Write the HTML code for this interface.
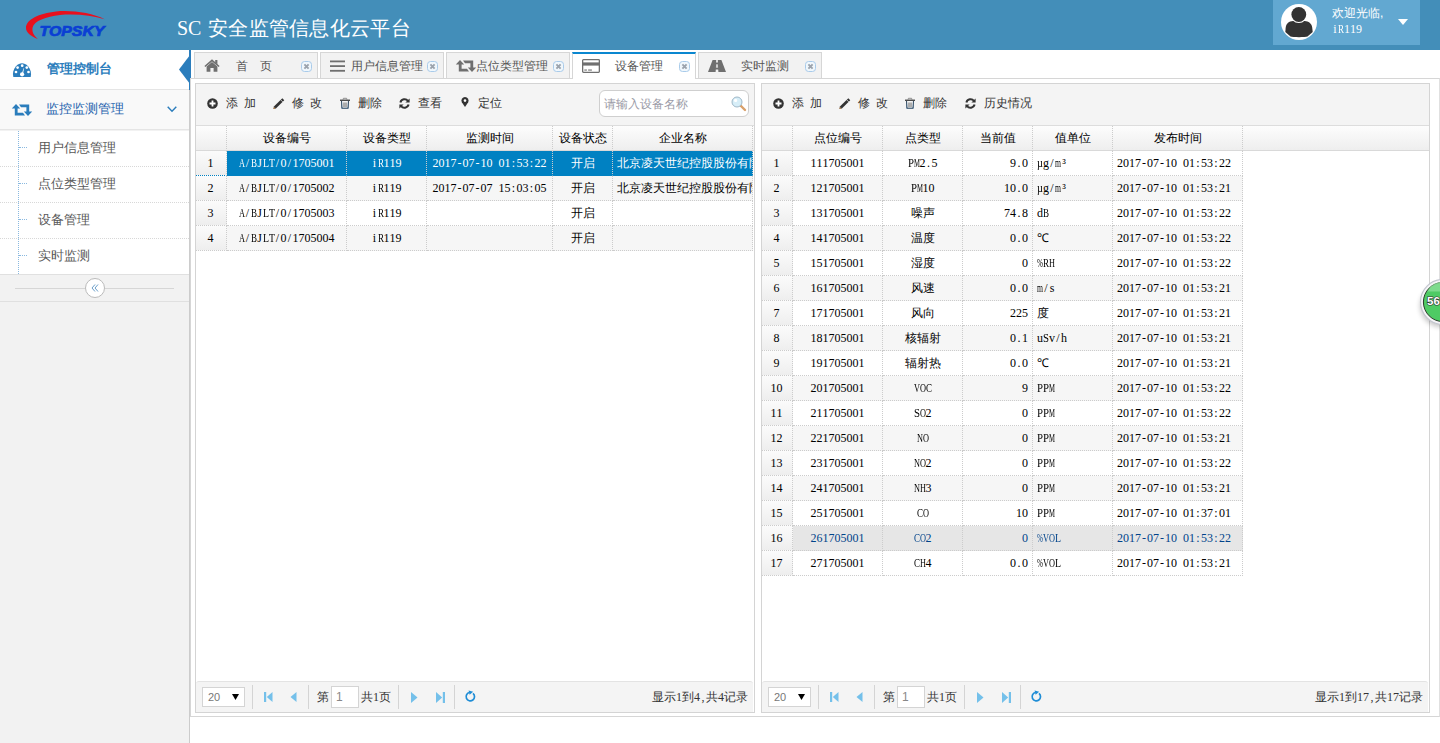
<!DOCTYPE html><html><head><meta charset="utf-8"><title>SC</title><style>
*{box-sizing:border-box;margin:0;padding:0}
html,body{width:1440px;height:743px;overflow:hidden}
body{position:relative;background:#fff;font-family:"Liberation Sans",sans-serif;font-size:12px;color:#333}
.a{position:absolute}
.m{font-family:"Liberation Serif",serif}
.m i,i.s{font-style:normal;display:inline-flex;justify-content:center;width:6px}
i.s{font-family:"Liberation Serif",serif}
.c.m{line-height:24px}
.ws{word-spacing:2.7px}
.t{white-space:nowrap;line-height:14px;height:14px}
svg{display:block;position:absolute;overflow:visible}
/* grid */
.row{position:absolute;left:0;height:25px;display:flex}
.c{height:25px;border-right:1px dotted #ccc;border-bottom:1px dotted #ccc;line-height:24px;white-space:nowrap;overflow:hidden;padding:0 4px;font-size:12px;color:#000}
.hd .c{border-bottom:1px solid #d9d9d9;text-align:center;color:#000}
.rn{background:linear-gradient(to bottom,#fbfbfb,#eeeeee);text-align:center;padding:0 1px 0 0}
.alt{background:#f6f6f6}
.sel .c{background:#0081c2;color:#fff;border-bottom-color:#0081c2}
.sel .rn{background:linear-gradient(to bottom,#fbfbfb,#eeeeee);color:#000}
.hov .c{background:#e6e6e6;color:#00438a}
.hov .rn{background:linear-gradient(to bottom,#fbfbfb,#eeeeee);color:#000}
.ce{text-align:center}.ri{text-align:right;padding-right:4px}.le{text-align:left}
</style></head><body>
<div class="a" style="left:0;top:0;width:1440px;height:50px;background:#438eb9"></div>
<svg style="left:0;top:0" width="120" height="50" viewBox="0 0 120 50">
<path d="M104.7 19.2 C 92 13, 72 10, 56 11.5 C 39 13.5, 26 19.5, 26 28 C 26 32.5, 31 36.5, 37.8 38.9 C 33.5 35.5, 31.8 31.5, 32.6 27.5 C 34 21, 46 16.5, 60 15 C 76 13.6, 92 15.5, 104.7 19.2 Z" fill="#e8101e"/>
<text x="39.5" y="35.6" font-family="Liberation Sans" font-weight="bold" font-style="italic" font-size="14" fill="#0a3fd4" stroke="#0a3fd4" stroke-width="0.7" textLength="65" lengthAdjust="spacingAndGlyphs">TOPSKY</text>
</svg>
<div class="a" style="left:177px;top:16px;height:24px;line-height:24px;color:#fff;white-space:nowrap"><span style="font-family:'Liberation Serif',serif;font-size:20px;display:inline-block;width:31px">SC</span><span style="font-size:20px;letter-spacing:0.3px">安全监管信息化云平台</span></div>
<div class="a" style="left:1273px;top:0;width:147px;height:45px;background:#62a8d1"></div>
<svg style="left:1281px;top:4px" width="36" height="36" viewBox="0 0 36 36">
<circle cx="18" cy="18" r="18" fill="#fff"/>
<path d="M4.3 28 L4.7 23.5 C 5.2 19.5, 8 17.2, 12 17 L 23.6 17 C 27.6 17.2, 30.6 19.5, 31.2 23.5 L 31.7 28 L 26.5 32.6 C 24.5 33.3, 11.5 33.3, 9.5 32.6 Z" fill="#333"/>
<circle cx="17.8" cy="10.5" r="8.6" fill="#fff"/>
<circle cx="17.8" cy="10.5" r="7.4" fill="#333"/>
</svg>
<div class="a t" style="left:1332px;top:6px;color:#fff;font-size:12px">欢迎光临,</div>
<div class="a t m" style="left:1332px;top:22px;color:#fff;font-size:12px"><i>i</i><i style="transform:scaleX(0.75)">R</i><i>1</i><i>1</i><i>9</i></div>
<svg style="left:1397.5px;top:19px" width="10" height="6" viewBox="0 0 10 6"><path d="M0 0 L10 0 L5 6 Z" fill="#fff"/></svg>
<div class="a" style="left:0;top:50px;width:190px;height:693px;background:#f2f2f2;border-right:1px solid #cccccc"></div>
<div class="a" style="left:0;top:50px;width:189px;height:40px;background:#fff;border-bottom:1px solid #e5e5e5"></div>
<svg style="left:13px;top:63px" width="18" height="14" viewBox="0 0 18 14">
<path d="M0.3 14 C -0.6 10.5, 0.2 6, 3 3.2 C 5 1.2, 7 0.3, 9 0.3 C 11 0.3, 13 1.2, 15 3.2 C 17.8 6, 18.6 10.5, 17.7 14 Z" fill="#2b7dbc"/>
<circle cx="3" cy="9" r="1.35" fill="#fff"/><circle cx="4.6" cy="4.6" r="1.35" fill="#fff"/><circle cx="9.2" cy="2.7" r="1.35" fill="#fff"/><circle cx="13.8" cy="4.6" r="1.35" fill="#fff"/><circle cx="15.5" cy="9" r="1.35" fill="#fff"/>
<path d="M8.9 10.5 L10.6 5.2 L11.1 5.3 L10 10.8 Z" fill="#fff"/><circle cx="9.1" cy="11.3" r="2.1" fill="#fff"/>
</svg>
<div class="a t" style="left:47px;top:61.5px;color:#2b7dbc;font-size:13px;font-weight:bold;line-height:14px">管理控制台</div>
<div class="a" style="left:189px;top:50px;width:2px;height:40px;background:#2b7dbc"></div>
<svg style="left:179px;top:55px" width="11" height="29" viewBox="0 0 11 29"><path d="M11 0 L0 14.5 L11 29 Z" fill="#2b7dbc"/></svg>
<div class="a" style="left:0;top:90px;width:189px;height:40px;background:#f9f9f9;border-bottom:1px solid #e5e5e5"></div>
<svg style="left:12px;top:104px" width="20" height="12" viewBox="0 0 20 12">
<path d="M4 0 L8.2 4.4 L5.6 4.4 L5.6 8.8 L11 8.8 L13 11.6 L2.8 11.6 L2.8 4.4 L-0.2 4.4 Z" fill="#2b7dbc"/>
<path d="M16 12 L11.8 7.6 L14.4 7.6 L14.4 3.2 L9 3.2 L7 0.4 L17.2 0.4 L17.2 7.6 L20.2 7.6 Z" fill="#2b7dbc"/>
</svg>
<div class="a t" style="left:46px;top:101.5px;color:#1f64ae;font-size:13px">监控监测管理</div>
<svg style="left:167px;top:106px" width="10" height="7" viewBox="0 0 10 7"><path d="M0.7 0.7 L5 5.3 L9.3 0.7" fill="none" stroke="#2b7dbc" stroke-width="1.4"/></svg>
<div class="a" style="left:0;top:131px;width:189px;height:143px;background:#fff"></div>
<div class="a" style="left:18px;top:131px;width:0;height:143px;border-left:1px dotted #8ab9e0"></div>
<div class="a" style="left:19px;top:147px;width:8px;height:0;border-top:1px dotted #8ab9e0"></div>
<div class="a t" style="left:38px;top:141px;color:#585858;font-size:13px">用户信息管理</div>
<div class="a" style="left:0;top:166px;width:189px;height:0;border-top:1px dotted #d8d8d8"></div>
<div class="a" style="left:19px;top:183px;width:8px;height:0;border-top:1px dotted #8ab9e0"></div>
<div class="a t" style="left:38px;top:177px;color:#585858;font-size:13px">点位类型管理</div>
<div class="a" style="left:0;top:202px;width:189px;height:0;border-top:1px dotted #d8d8d8"></div>
<div class="a" style="left:19px;top:219px;width:8px;height:0;border-top:1px dotted #8ab9e0"></div>
<div class="a t" style="left:38px;top:213px;color:#585858;font-size:13px">设备管理</div>
<div class="a" style="left:0;top:238px;width:189px;height:0;border-top:1px dotted #d8d8d8"></div>
<div class="a" style="left:19px;top:255px;width:8px;height:0;border-top:1px dotted #8ab9e0"></div>
<div class="a t" style="left:38px;top:249px;color:#585858;font-size:13px">实时监测</div>
<div class="a" style="left:0;top:274px;width:189px;height:28px;background:#f2f2f2;border-top:1px solid #e0e0e0;border-bottom:1px solid #e0e0e0"></div>
<div class="a" style="left:15px;top:288px;width:159px;height:1px;background:#d6d6d6"></div>
<div class="a" style="left:85px;top:278px;width:20px;height:20px;border-radius:50%;background:#fff;border:1px solid #bbb"></div>
<svg style="left:90px;top:283px" width="10" height="10" viewBox="0 0 10 10"><path d="M5 1.5 L2 5 L5 8.5 M8 1.5 L5 5 L8 8.5" fill="none" stroke="#6a9ec9" stroke-width="1"/></svg>
<div class="a" style="left:190px;top:78px;width:1250px;height:639px;border-left:1px solid #d6d6d6;border-right:1px solid #d6d6d6;border-bottom:1px solid #d6d6d6;border-top:1px solid #d6d6d6;border-right-color:#e0e0e0"></div>
<div class="a" style="left:194px;top:52px;width:124px;height:26px;background:#f2f2f2;border:1px solid #d6d6d6;border-bottom:none"></div>
<svg style="left:204px;top:59px" width="16" height="13" viewBox="0 0 16 13"><path d="M8 0.3 L15.6 7 L14.6 8.1 L8 2.4 L1.4 8.1 L0.4 7 Z" fill="#6f6f6f"/><path d="M11.2 0.9 L13.4 0.9 L13.4 5.6 L11.2 3.8 Z" fill="#6f6f6f"/><path d="M2.6 7.4 L8 2.9 L13.4 7.4 L13.4 12.7 L9.6 12.7 L9.6 9 L6.4 9 L6.4 12.7 L2.6 12.7 Z" fill="#6f6f6f"/></svg>
<div class="a t" style="left:236px;top:59px;color:#555;font-size:12px">首　页</div>
<svg style="left:301px;top:61px" width="12" height="12" viewBox="0 0 12 12"><rect x="0.5" y="0.5" width="10" height="10" rx="3" fill="#f0f7fc" stroke="#a9cbea" stroke-width="1"/><path d="M3.4 3.4 L7.6 7.6 M7.6 3.4 L3.4 7.6" stroke="#9ba3ad" stroke-width="1.9"/></svg>
<div class="a" style="left:320px;top:52px;width:124px;height:26px;background:#f2f2f2;border:1px solid #d6d6d6;border-bottom:none"></div>
<svg style="left:330px;top:60px" width="15" height="12" viewBox="0 0 15 12"><rect x="0" y="0.5" width="15" height="1.8" fill="#6f6f6f"/><rect x="0" y="5.2" width="15" height="1.8" fill="#6f6f6f"/><rect x="0" y="9.9" width="15" height="1.8" fill="#6f6f6f"/></svg>
<div class="a t" style="left:351px;top:59px;color:#555;font-size:12px">用户信息管理</div>
<svg style="left:427px;top:61px" width="12" height="12" viewBox="0 0 12 12"><rect x="0.5" y="0.5" width="10" height="10" rx="3" fill="#f0f7fc" stroke="#a9cbea" stroke-width="1"/><path d="M3.4 3.4 L7.6 7.6 M7.6 3.4 L3.4 7.6" stroke="#9ba3ad" stroke-width="1.9"/></svg>
<div class="a" style="left:446px;top:52px;width:124px;height:26px;background:#f2f2f2;border:1px solid #d6d6d6;border-bottom:none"></div>
<svg style="left:456px;top:60px" width="20" height="12" viewBox="0 0 20 12"><path d="M4 0 L8.2 4.4 L5.6 4.4 L5.6 8.8 L11 8.8 L13 11.6 L2.8 11.6 L2.8 4.4 L-0.2 4.4 Z" fill="#6f6f6f"/><path d="M16 12 L11.8 7.6 L14.4 7.6 L14.4 3.2 L9 3.2 L7 0.4 L17.2 0.4 L17.2 7.6 L20.2 7.6 Z" fill="#6f6f6f"/></svg>
<div class="a t" style="left:476px;top:59px;color:#555;font-size:12px">点位类型管理</div>
<svg style="left:553px;top:61px" width="12" height="12" viewBox="0 0 12 12"><rect x="0.5" y="0.5" width="10" height="10" rx="3" fill="#f0f7fc" stroke="#a9cbea" stroke-width="1"/><path d="M3.4 3.4 L7.6 7.6 M7.6 3.4 L3.4 7.6" stroke="#9ba3ad" stroke-width="1.9"/></svg>
<div class="a" style="left:572px;top:52px;width:124px;height:27px;background:#fff;border:1px solid #d6d6d6;border-bottom:none;border-top:2px solid #0a87d0"></div>
<svg style="left:582px;top:59px" width="18" height="14" viewBox="0 0 18 14"><rect x="0.65" y="0.65" width="16.7" height="12.7" rx="0.8" fill="none" stroke="#6f6f6f" stroke-width="1.3"/><rect x="0.6" y="3.4" width="16.8" height="3.2" fill="#6f6f6f"/><rect x="2.3" y="10.5" width="2.6" height="1.1" fill="#6f6f6f"/><rect x="6.1" y="10.5" width="3.8" height="1.1" fill="#6f6f6f"/></svg>
<div class="a t" style="left:615px;top:59px;color:#555;font-size:12px">设备管理</div>
<svg style="left:679px;top:61px" width="12" height="12" viewBox="0 0 12 12"><rect x="0.5" y="0.5" width="10" height="10" rx="3" fill="#f0f7fc" stroke="#a9cbea" stroke-width="1"/><path d="M3.4 3.4 L7.6 7.6 M7.6 3.4 L3.4 7.6" stroke="#9ba3ad" stroke-width="1.9"/></svg>
<div class="a" style="left:698px;top:52px;width:124px;height:26px;background:#f2f2f2;border:1px solid #d6d6d6;border-bottom:none"></div>
<svg style="left:708px;top:60px" width="18" height="12" viewBox="0 0 18 12"><path d="M4.6 0 L8.2 0 L8.1 2.6 L9.9 2.6 L9.8 0 L13.4 0 L18 12 L10.4 12 L10.2 9.4 L7.8 9.4 L7.6 12 L0 12 Z" fill="#6f6f6f"/><path d="M8.1 4.2 L9.9 4.2 L10.1 7.8 L7.9 7.8 Z" fill="#d0d0d0"/></svg>
<div class="a t" style="left:741px;top:59px;color:#555;font-size:12px">实时监测</div>
<svg style="left:805px;top:61px" width="12" height="12" viewBox="0 0 12 12"><rect x="0.5" y="0.5" width="10" height="10" rx="3" fill="#f0f7fc" stroke="#a9cbea" stroke-width="1"/><path d="M3.4 3.4 L7.6 7.6 M7.6 3.4 L3.4 7.6" stroke="#9ba3ad" stroke-width="1.9"/></svg>
<div class="a" style="left:195px;top:83px;width:560px;height:630px;border:1px solid #d4d4d4;background:#fff;overflow:hidden">
<div class="a" style="left:0;top:0;width:558px;height:42px;background:#f4f4f4;border-bottom:1px solid #dddddd"></div>
<svg style="left:11px;top:14px" width="11" height="11" viewBox="0 0 11 11"><circle cx="5.5" cy="5.5" r="5.3" fill="#333"/><path d="M5.5 2.5 L5.5 8.5 M2.5 5.5 L8.5 5.5" stroke="#fff" stroke-width="1.8"/></svg>
<div class="a t ws" style="left:30px;top:12px;color:#333;font-size:12px">添 加</div>
<svg style="left:77px;top:15px" width="12" height="11" viewBox="0 0 12 11"><path d="M0.5 9.8 L1.18 7.2 L9.33 -0.7 L11.27 1.3 L3.12 9.2 Z" fill="#333"/><path d="M7.6 0.68 L9.83 2.98" stroke="#f4f4f4" stroke-width="0.7"/><path d="M0.5 9.8 L1.18 7.2 L3.12 9.2 Z" fill="#555"/><path d="M0.5 9.9 L0.9 8.2 L2.2 9.5 Z" fill="#d98a3a"/></svg>
<div class="a t ws" style="left:96px;top:12px;color:#333;font-size:12px">修 改</div>
<svg style="left:144px;top:14px" width="10" height="11" viewBox="0 0 10 11"><rect x="0" y="1.6" width="10" height="1.3" fill="#3a3a3a"/><path d="M3 1.8 L3.4 0.3 L6.6 0.3 L7 1.8" fill="none" stroke="#777" stroke-width="0.8"/><path d="M1.5 3 L1.9 10.2 L8.1 10.2 L8.5 3" fill="none" stroke="#4a7fb0" stroke-width="1.1"/><path d="M1.5 3 L1.9 10.2 L8.1 10.2 L8.5 3" fill="none" stroke="#333" stroke-width="0.6"/><path d="M4 4.5 L4 9 M6 4.5 L6 9" stroke="#555" stroke-width="0.9"/></svg>
<div class="a t ws" style="left:162px;top:12px;color:#333;font-size:12px">删除</div>
<svg style="left:203px;top:14px" width="11" height="11" viewBox="0 0 11 11"><path d="M1.4 4.4 A4.3 4.3 0 0 1 9 3" fill="none" stroke="#333" stroke-width="2"/><path d="M10.6 0.4 L10.6 4.6 L6.4 4.6 Z" fill="#333"/><path d="M9.6 6.6 A4.3 4.3 0 0 1 2 8" fill="none" stroke="#333" stroke-width="2"/><path d="M0.4 10.6 L0.4 6.4 L4.6 6.4 Z" fill="#333"/></svg>
<div class="a t ws" style="left:222px;top:12px;color:#333;font-size:12px">查看</div>
<svg style="left:265px;top:13px" width="8" height="10" viewBox="0 0 8 10"><path d="M4 10 L0.8 5.2 A3.6 3.6 0 1 1 7.2 5.2 Z" fill="#333"/><circle cx="4" cy="3.6" r="1.3" fill="#fff"/></svg>
<div class="a t ws" style="left:282px;top:12px;color:#333;font-size:12px">定位</div>
<div class="a" style="left:403px;top:6px;width:150px;height:27px;border:1px solid #cfcfcf;border-radius:6px;background:#fff"></div>
<div class="a t" style="left:408px;top:13px;color:#9a9aa6;font-size:12px">请输入设备名称</div>
<svg style="left:535px;top:12px" width="15" height="15" viewBox="0 0 15 15"><path d="M9.5 9.5 L14 14" stroke="#d9a06a" stroke-width="2.4" stroke-linecap="round"/><circle cx="6" cy="6" r="5" fill="#d7eef8" stroke="#9fb8c8" stroke-width="1"/><circle cx="4.6" cy="4.4" r="1.6" fill="#fff"/></svg>
<div class="a" style="left:0;top:42px;width:558px;height:25px;background:linear-gradient(to bottom,#fdfdfd,#eeeeee);border-bottom:1px solid #d9d9d9"></div>
<div class="row hd" style="top:42px">
<div class="c" style="width:31px;background:transparent"></div>
<div class="c" style="width:120px">设备编号</div>
<div class="c" style="width:80px">设备类型</div>
<div class="c" style="width:126px">监测时间</div>
<div class="c" style="width:60px">设备状态</div>
<div class="c" style="width:140px">企业名称</div>
</div>
<div class="row sel" style="top:67px">
<div class="c rn m" style="width:31px"><i>1</i></div>
<div class="c ce m" style="width:120px"><i style="transform:scaleX(0.69)">A</i><i>/</i><i style="transform:scaleX(0.75)">B</i><i>J</i><i style="transform:scaleX(0.82)">L</i><i style="transform:scaleX(0.82)">T</i><i>/</i><i>0</i><i>/</i><i>1</i><i>7</i><i>0</i><i>5</i><i>0</i><i>0</i><i>1</i></div>
<div class="c ce m" style="width:80px"><i>i</i><i style="transform:scaleX(0.75)">R</i><i>1</i><i>1</i><i>9</i></div>
<div class="c ce m" style="width:126px"><i>2</i><i>0</i><i>1</i><i>7</i><i>-</i><i>0</i><i>7</i><i>-</i><i>1</i><i>0</i><i>&nbsp;</i><i>0</i><i>1</i><i>:</i><i>5</i><i>3</i><i>:</i><i>2</i><i>2</i></div>
<div class="c ce" style="width:60px">开启</div>
<div class="c le" style="width:140px">北京凌天世纪控股股份有限公司</div>
</div>
<div class="row alt" style="top:92px">
<div class="c rn m" style="width:31px"><i>2</i></div>
<div class="c ce m" style="width:120px"><i style="transform:scaleX(0.69)">A</i><i>/</i><i style="transform:scaleX(0.75)">B</i><i>J</i><i style="transform:scaleX(0.82)">L</i><i style="transform:scaleX(0.82)">T</i><i>/</i><i>0</i><i>/</i><i>1</i><i>7</i><i>0</i><i>5</i><i>0</i><i>0</i><i>2</i></div>
<div class="c ce m" style="width:80px"><i>i</i><i style="transform:scaleX(0.75)">R</i><i>1</i><i>1</i><i>9</i></div>
<div class="c ce m" style="width:126px"><i>2</i><i>0</i><i>1</i><i>7</i><i>-</i><i>0</i><i>7</i><i>-</i><i>0</i><i>7</i><i>&nbsp;</i><i>1</i><i>5</i><i>:</i><i>0</i><i>3</i><i>:</i><i>0</i><i>5</i></div>
<div class="c ce" style="width:60px">开启</div>
<div class="c le" style="width:140px">北京凌天世纪控股股份有限公司</div>
</div>
<div class="row" style="top:117px">
<div class="c rn m" style="width:31px"><i>3</i></div>
<div class="c ce m" style="width:120px"><i style="transform:scaleX(0.69)">A</i><i>/</i><i style="transform:scaleX(0.75)">B</i><i>J</i><i style="transform:scaleX(0.82)">L</i><i style="transform:scaleX(0.82)">T</i><i>/</i><i>0</i><i>/</i><i>1</i><i>7</i><i>0</i><i>5</i><i>0</i><i>0</i><i>3</i></div>
<div class="c ce m" style="width:80px"><i>i</i><i style="transform:scaleX(0.75)">R</i><i>1</i><i>1</i><i>9</i></div>
<div class="c ce m" style="width:126px"></div>
<div class="c ce" style="width:60px">开启</div>
<div class="c le m" style="width:140px"></div>
</div>
<div class="row alt" style="top:142px">
<div class="c rn m" style="width:31px"><i>4</i></div>
<div class="c ce m" style="width:120px"><i style="transform:scaleX(0.69)">A</i><i>/</i><i style="transform:scaleX(0.75)">B</i><i>J</i><i style="transform:scaleX(0.82)">L</i><i style="transform:scaleX(0.82)">T</i><i>/</i><i>0</i><i>/</i><i>1</i><i>7</i><i>0</i><i>5</i><i>0</i><i>0</i><i>4</i></div>
<div class="c ce m" style="width:80px"><i>i</i><i style="transform:scaleX(0.75)">R</i><i>1</i><i>1</i><i>9</i></div>
<div class="c ce m" style="width:126px"></div>
<div class="c ce" style="width:60px">开启</div>
<div class="c le m" style="width:140px"></div>
</div>
<div class="a" style="left:0;top:597px;width:557px;height:31px;background:#f4f4f4;border-top:1px solid #e3e3e3;border-radius:3px 3px 0 0"></div>
<div class="a m" style="left:6px;top:603px;width:43px;height:20px;border:1px solid #d4d4d4;background:#fff;font-family:'Liberation Sans',sans-serif;letter-spacing:0;font-size:11px;color:#777;line-height:19px;padding-left:5px">20</div>
<svg style="left:36px;top:610px" width="7" height="6" viewBox="0 0 7 6"><path d="M0 0 L7 0 L3.5 6 Z" fill="#000"/></svg>
<div class="a" style="left:56px;top:601px;width:1px;height:24px;background:#d4d4d4"></div>
<div class="a" style="left:112px;top:601px;width:1px;height:24px;background:#d4d4d4"></div>
<div class="a" style="left:202px;top:601px;width:1px;height:24px;background:#d4d4d4"></div>
<div class="a" style="left:258px;top:601px;width:1px;height:24px;background:#d4d4d4"></div>
<svg style="left:68px;top:608px" width="9" height="10" viewBox="0 0 9 10"><rect x="0" y="0" width="2.2" height="10" fill="#74c0ea"/><path d="M8.5 0 L2.8 5 L8.5 10 Z" fill="#74c0ea"/></svg>
<svg style="left:94px;top:608px" width="7" height="10" viewBox="0 0 7 10"><path d="M6.5 0 L0.5 5 L6.5 10 Z" fill="#74c0ea"/></svg>
<div class="a t" style="left:121px;top:606px;color:#333">第</div>
<div class="a" style="left:135px;top:602px;width:28px;height:22px;border:1px solid #d4d4d4;background:#fff;color:#888;font-size:12px;line-height:20px;padding-left:4px">1</div>
<div class="a t" style="left:165px;top:606px;color:#333">共<i class="s">1</i>页</div>
<svg style="left:215px;top:608px" width="7" height="11" viewBox="0 0 7 11"><path d="M0 0 L6.5 5.5 L0 11 Z" fill="#74c0ea"/></svg>
<svg style="left:240px;top:608px" width="9" height="11" viewBox="0 0 9 11"><path d="M0 0 L6.2 5.5 L0 11 Z" fill="#74c0ea"/><rect x="6.8" y="0" width="2.2" height="11" fill="#74c0ea"/></svg>
<svg style="left:269px;top:606px" width="12" height="12" viewBox="0 0 12 12"><path d="M8.0 3.4 A4.2 4.2 0 1 1 4.6 2.5" fill="none" stroke="#1f8dd6" stroke-width="1.7"/><path d="M3.6 0.4 L4.6 4.8 L8.2 1.8 Z" fill="#1f8dd6"/></svg>
<div class="a t" style="right:6px;top:606px;color:#333">显示<i class="s">1</i>到<i class="s">4</i><i class="s">,</i>共<i class="s">4</i>记录</div>
</div>
<div class="a" style="left:761px;top:83px;width:669px;height:630px;border:1px solid #d4d4d4;background:#fff;overflow:hidden">
<div class="a" style="left:0;top:0;width:667px;height:42px;background:#f4f4f4;border-bottom:1px solid #dddddd"></div>
<svg style="left:11px;top:14px" width="11" height="11" viewBox="0 0 11 11"><circle cx="5.5" cy="5.5" r="5.3" fill="#333"/><path d="M5.5 2.5 L5.5 8.5 M2.5 5.5 L8.5 5.5" stroke="#fff" stroke-width="1.8"/></svg>
<div class="a t ws" style="left:30px;top:12px;color:#333;font-size:12px">添 加</div>
<svg style="left:77px;top:15px" width="12" height="11" viewBox="0 0 12 11"><path d="M0.5 9.8 L1.18 7.2 L9.33 -0.7 L11.27 1.3 L3.12 9.2 Z" fill="#333"/><path d="M7.6 0.68 L9.83 2.98" stroke="#f4f4f4" stroke-width="0.7"/><path d="M0.5 9.8 L1.18 7.2 L3.12 9.2 Z" fill="#555"/><path d="M0.5 9.9 L0.9 8.2 L2.2 9.5 Z" fill="#d98a3a"/></svg>
<div class="a t ws" style="left:96px;top:12px;color:#333;font-size:12px">修 改</div>
<svg style="left:143px;top:14px" width="10" height="11" viewBox="0 0 10 11"><rect x="0" y="1.6" width="10" height="1.3" fill="#3a3a3a"/><path d="M3 1.8 L3.4 0.3 L6.6 0.3 L7 1.8" fill="none" stroke="#777" stroke-width="0.8"/><path d="M1.5 3 L1.9 10.2 L8.1 10.2 L8.5 3" fill="none" stroke="#4a7fb0" stroke-width="1.1"/><path d="M1.5 3 L1.9 10.2 L8.1 10.2 L8.5 3" fill="none" stroke="#333" stroke-width="0.6"/><path d="M4 4.5 L4 9 M6 4.5 L6 9" stroke="#555" stroke-width="0.9"/></svg>
<div class="a t ws" style="left:161px;top:12px;color:#333;font-size:12px">删除</div>
<svg style="left:203px;top:14px" width="11" height="11" viewBox="0 0 11 11"><path d="M1.4 4.4 A4.3 4.3 0 0 1 9 3" fill="none" stroke="#333" stroke-width="2"/><path d="M10.6 0.4 L10.6 4.6 L6.4 4.6 Z" fill="#333"/><path d="M9.6 6.6 A4.3 4.3 0 0 1 2 8" fill="none" stroke="#333" stroke-width="2"/><path d="M0.4 10.6 L0.4 6.4 L4.6 6.4 Z" fill="#333"/></svg>
<div class="a t ws" style="left:222px;top:12px;color:#333;font-size:12px">历史情况</div>
<div class="a" style="left:0;top:42px;width:667px;height:25px;background:linear-gradient(to bottom,#fdfdfd,#eeeeee);border-bottom:1px solid #d9d9d9"></div>
<div class="row hd" style="top:42px">
<div class="c" style="width:31px;background:transparent"></div>
<div class="c" style="width:90px">点位编号</div>
<div class="c" style="width:80px">点类型</div>
<div class="c" style="width:70px">当前值</div>
<div class="c" style="width:80px">值单位</div>
<div class="c" style="width:130px">发布时间</div>
</div>
<div class="row" style="top:67px">
<div class="c rn m" style="width:31px"><i>1</i></div>
<div class="c ce m" style="width:90px"><i>1</i><i>1</i><i>1</i><i>7</i><i>0</i><i>5</i><i>0</i><i>0</i><i>1</i></div>
<div class="c ce m" style="width:80px"><i style="transform:scaleX(0.90)">P</i><i style="transform:scaleX(0.56)">M</i><i>2</i><i>.</i><i>5</i></div>
<div class="c ri m" style="width:70px"><i>9</i><i>.</i><i>0</i></div>
<div class="c le m" style="width:80px"><i style="transform:scaleX(0.87)">µ</i><i>g</i><i>/</i><i style="transform:scaleX(0.64)">m</i><i>³</i></div>
<div class="c le m" style="width:130px"><i>2</i><i>0</i><i>1</i><i>7</i><i>-</i><i>0</i><i>7</i><i>-</i><i>1</i><i>0</i><i>&nbsp;</i><i>0</i><i>1</i><i>:</i><i>5</i><i>3</i><i>:</i><i>2</i><i>2</i></div>
</div>
<div class="row alt" style="top:92px">
<div class="c rn m" style="width:31px"><i>2</i></div>
<div class="c ce m" style="width:90px"><i>1</i><i>2</i><i>1</i><i>7</i><i>0</i><i>5</i><i>0</i><i>0</i><i>1</i></div>
<div class="c ce m" style="width:80px"><i style="transform:scaleX(0.90)">P</i><i style="transform:scaleX(0.56)">M</i><i>1</i><i>0</i></div>
<div class="c ri m" style="width:70px"><i>1</i><i>0</i><i>.</i><i>0</i></div>
<div class="c le m" style="width:80px"><i style="transform:scaleX(0.87)">µ</i><i>g</i><i>/</i><i style="transform:scaleX(0.64)">m</i><i>³</i></div>
<div class="c le m" style="width:130px"><i>2</i><i>0</i><i>1</i><i>7</i><i>-</i><i>0</i><i>7</i><i>-</i><i>1</i><i>0</i><i>&nbsp;</i><i>0</i><i>1</i><i>:</i><i>5</i><i>3</i><i>:</i><i>2</i><i>1</i></div>
</div>
<div class="row" style="top:117px">
<div class="c rn m" style="width:31px"><i>3</i></div>
<div class="c ce m" style="width:90px"><i>1</i><i>3</i><i>1</i><i>7</i><i>0</i><i>5</i><i>0</i><i>0</i><i>1</i></div>
<div class="c ce" style="width:80px">噪声</div>
<div class="c ri m" style="width:70px"><i>7</i><i>4</i><i>.</i><i>8</i></div>
<div class="c le m" style="width:80px"><i>d</i><i style="transform:scaleX(0.75)">B</i></div>
<div class="c le m" style="width:130px"><i>2</i><i>0</i><i>1</i><i>7</i><i>-</i><i>0</i><i>7</i><i>-</i><i>1</i><i>0</i><i>&nbsp;</i><i>0</i><i>1</i><i>:</i><i>5</i><i>3</i><i>:</i><i>2</i><i>2</i></div>
</div>
<div class="row alt" style="top:142px">
<div class="c rn m" style="width:31px"><i>4</i></div>
<div class="c ce m" style="width:90px"><i>1</i><i>4</i><i>1</i><i>7</i><i>0</i><i>5</i><i>0</i><i>0</i><i>1</i></div>
<div class="c ce" style="width:80px">温度</div>
<div class="c ri m" style="width:70px"><i>0</i><i>.</i><i>0</i></div>
<div class="c le" style="width:80px">℃</div>
<div class="c le m" style="width:130px"><i>2</i><i>0</i><i>1</i><i>7</i><i>-</i><i>0</i><i>7</i><i>-</i><i>1</i><i>0</i><i>&nbsp;</i><i>0</i><i>1</i><i>:</i><i>5</i><i>3</i><i>:</i><i>2</i><i>2</i></div>
</div>
<div class="row" style="top:167px">
<div class="c rn m" style="width:31px"><i>5</i></div>
<div class="c ce m" style="width:90px"><i>1</i><i>5</i><i>1</i><i>7</i><i>0</i><i>5</i><i>0</i><i>0</i><i>1</i></div>
<div class="c ce" style="width:80px">湿度</div>
<div class="c ri m" style="width:70px"><i>0</i></div>
<div class="c le m" style="width:80px"><i style="transform:scaleX(0.60)">%</i><i style="transform:scaleX(0.75)">R</i><i style="transform:scaleX(0.69)">H</i></div>
<div class="c le m" style="width:130px"><i>2</i><i>0</i><i>1</i><i>7</i><i>-</i><i>0</i><i>7</i><i>-</i><i>1</i><i>0</i><i>&nbsp;</i><i>0</i><i>1</i><i>:</i><i>5</i><i>3</i><i>:</i><i>2</i><i>2</i></div>
</div>
<div class="row alt" style="top:192px">
<div class="c rn m" style="width:31px"><i>6</i></div>
<div class="c ce m" style="width:90px"><i>1</i><i>6</i><i>1</i><i>7</i><i>0</i><i>5</i><i>0</i><i>0</i><i>1</i></div>
<div class="c ce" style="width:80px">风速</div>
<div class="c ri m" style="width:70px"><i>0</i><i>.</i><i>0</i></div>
<div class="c le m" style="width:80px"><i style="transform:scaleX(0.64)">m</i><i>/</i><i>s</i></div>
<div class="c le m" style="width:130px"><i>2</i><i>0</i><i>1</i><i>7</i><i>-</i><i>0</i><i>7</i><i>-</i><i>1</i><i>0</i><i>&nbsp;</i><i>0</i><i>1</i><i>:</i><i>5</i><i>3</i><i>:</i><i>2</i><i>1</i></div>
</div>
<div class="row" style="top:217px">
<div class="c rn m" style="width:31px"><i>7</i></div>
<div class="c ce m" style="width:90px"><i>1</i><i>7</i><i>1</i><i>7</i><i>0</i><i>5</i><i>0</i><i>0</i><i>1</i></div>
<div class="c ce" style="width:80px">风向</div>
<div class="c ri m" style="width:70px"><i>2</i><i>2</i><i>5</i></div>
<div class="c le" style="width:80px">度</div>
<div class="c le m" style="width:130px"><i>2</i><i>0</i><i>1</i><i>7</i><i>-</i><i>0</i><i>7</i><i>-</i><i>1</i><i>0</i><i>&nbsp;</i><i>0</i><i>1</i><i>:</i><i>5</i><i>3</i><i>:</i><i>2</i><i>1</i></div>
</div>
<div class="row alt" style="top:242px">
<div class="c rn m" style="width:31px"><i>8</i></div>
<div class="c ce m" style="width:90px"><i>1</i><i>8</i><i>1</i><i>7</i><i>0</i><i>5</i><i>0</i><i>0</i><i>1</i></div>
<div class="c ce" style="width:80px">核辐射</div>
<div class="c ri m" style="width:70px"><i>0</i><i>.</i><i>1</i></div>
<div class="c le m" style="width:80px"><i>u</i><i style="transform:scaleX(0.90)">S</i><i>v</i><i>/</i><i>h</i></div>
<div class="c le m" style="width:130px"><i>2</i><i>0</i><i>1</i><i>7</i><i>-</i><i>0</i><i>7</i><i>-</i><i>1</i><i>0</i><i>&nbsp;</i><i>0</i><i>1</i><i>:</i><i>5</i><i>3</i><i>:</i><i>2</i><i>1</i></div>
</div>
<div class="row" style="top:267px">
<div class="c rn m" style="width:31px"><i>9</i></div>
<div class="c ce m" style="width:90px"><i>1</i><i>9</i><i>1</i><i>7</i><i>0</i><i>5</i><i>0</i><i>0</i><i>1</i></div>
<div class="c ce" style="width:80px">辐射热</div>
<div class="c ri m" style="width:70px"><i>0</i><i>.</i><i>0</i></div>
<div class="c le" style="width:80px">℃</div>
<div class="c le m" style="width:130px"><i>2</i><i>0</i><i>1</i><i>7</i><i>-</i><i>0</i><i>7</i><i>-</i><i>1</i><i>0</i><i>&nbsp;</i><i>0</i><i>1</i><i>:</i><i>5</i><i>3</i><i>:</i><i>2</i><i>1</i></div>
</div>
<div class="row alt" style="top:292px">
<div class="c rn m" style="width:31px"><i>1</i><i>0</i></div>
<div class="c ce m" style="width:90px"><i>2</i><i>0</i><i>1</i><i>7</i><i>0</i><i>5</i><i>0</i><i>0</i><i>1</i></div>
<div class="c ce m" style="width:80px"><i style="transform:scaleX(0.69)">V</i><i style="transform:scaleX(0.69)">O</i><i style="transform:scaleX(0.75)">C</i></div>
<div class="c ri m" style="width:70px"><i>9</i></div>
<div class="c le m" style="width:80px"><i style="transform:scaleX(0.90)">P</i><i style="transform:scaleX(0.90)">P</i><i style="transform:scaleX(0.56)">M</i></div>
<div class="c le m" style="width:130px"><i>2</i><i>0</i><i>1</i><i>7</i><i>-</i><i>0</i><i>7</i><i>-</i><i>1</i><i>0</i><i>&nbsp;</i><i>0</i><i>1</i><i>:</i><i>5</i><i>3</i><i>:</i><i>2</i><i>2</i></div>
</div>
<div class="row" style="top:317px">
<div class="c rn m" style="width:31px"><i>1</i><i>1</i></div>
<div class="c ce m" style="width:90px"><i>2</i><i>1</i><i>1</i><i>7</i><i>0</i><i>5</i><i>0</i><i>0</i><i>1</i></div>
<div class="c ce m" style="width:80px"><i style="transform:scaleX(0.90)">S</i><i style="transform:scaleX(0.69)">O</i><i>2</i></div>
<div class="c ri m" style="width:70px"><i>0</i></div>
<div class="c le m" style="width:80px"><i style="transform:scaleX(0.90)">P</i><i style="transform:scaleX(0.90)">P</i><i style="transform:scaleX(0.56)">M</i></div>
<div class="c le m" style="width:130px"><i>2</i><i>0</i><i>1</i><i>7</i><i>-</i><i>0</i><i>7</i><i>-</i><i>1</i><i>0</i><i>&nbsp;</i><i>0</i><i>1</i><i>:</i><i>5</i><i>3</i><i>:</i><i>2</i><i>2</i></div>
</div>
<div class="row alt" style="top:342px">
<div class="c rn m" style="width:31px"><i>1</i><i>2</i></div>
<div class="c ce m" style="width:90px"><i>2</i><i>2</i><i>1</i><i>7</i><i>0</i><i>5</i><i>0</i><i>0</i><i>1</i></div>
<div class="c ce m" style="width:80px"><i style="transform:scaleX(0.69)">N</i><i style="transform:scaleX(0.69)">O</i></div>
<div class="c ri m" style="width:70px"><i>0</i></div>
<div class="c le m" style="width:80px"><i style="transform:scaleX(0.90)">P</i><i style="transform:scaleX(0.90)">P</i><i style="transform:scaleX(0.56)">M</i></div>
<div class="c le m" style="width:130px"><i>2</i><i>0</i><i>1</i><i>7</i><i>-</i><i>0</i><i>7</i><i>-</i><i>1</i><i>0</i><i>&nbsp;</i><i>0</i><i>1</i><i>:</i><i>5</i><i>3</i><i>:</i><i>2</i><i>1</i></div>
</div>
<div class="row" style="top:367px">
<div class="c rn m" style="width:31px"><i>1</i><i>3</i></div>
<div class="c ce m" style="width:90px"><i>2</i><i>3</i><i>1</i><i>7</i><i>0</i><i>5</i><i>0</i><i>0</i><i>1</i></div>
<div class="c ce m" style="width:80px"><i style="transform:scaleX(0.69)">N</i><i style="transform:scaleX(0.69)">O</i><i>2</i></div>
<div class="c ri m" style="width:70px"><i>0</i></div>
<div class="c le m" style="width:80px"><i style="transform:scaleX(0.90)">P</i><i style="transform:scaleX(0.90)">P</i><i style="transform:scaleX(0.56)">M</i></div>
<div class="c le m" style="width:130px"><i>2</i><i>0</i><i>1</i><i>7</i><i>-</i><i>0</i><i>7</i><i>-</i><i>1</i><i>0</i><i>&nbsp;</i><i>0</i><i>1</i><i>:</i><i>5</i><i>3</i><i>:</i><i>2</i><i>2</i></div>
</div>
<div class="row alt" style="top:392px">
<div class="c rn m" style="width:31px"><i>1</i><i>4</i></div>
<div class="c ce m" style="width:90px"><i>2</i><i>4</i><i>1</i><i>7</i><i>0</i><i>5</i><i>0</i><i>0</i><i>1</i></div>
<div class="c ce m" style="width:80px"><i style="transform:scaleX(0.69)">N</i><i style="transform:scaleX(0.69)">H</i><i>3</i></div>
<div class="c ri m" style="width:70px"><i>0</i></div>
<div class="c le m" style="width:80px"><i style="transform:scaleX(0.90)">P</i><i style="transform:scaleX(0.90)">P</i><i style="transform:scaleX(0.56)">M</i></div>
<div class="c le m" style="width:130px"><i>2</i><i>0</i><i>1</i><i>7</i><i>-</i><i>0</i><i>7</i><i>-</i><i>1</i><i>0</i><i>&nbsp;</i><i>0</i><i>1</i><i>:</i><i>5</i><i>3</i><i>:</i><i>2</i><i>1</i></div>
</div>
<div class="row" style="top:417px">
<div class="c rn m" style="width:31px"><i>1</i><i>5</i></div>
<div class="c ce m" style="width:90px"><i>2</i><i>5</i><i>1</i><i>7</i><i>0</i><i>5</i><i>0</i><i>0</i><i>1</i></div>
<div class="c ce m" style="width:80px"><i style="transform:scaleX(0.75)">C</i><i style="transform:scaleX(0.69)">O</i></div>
<div class="c ri m" style="width:70px"><i>1</i><i>0</i></div>
<div class="c le m" style="width:80px"><i style="transform:scaleX(0.90)">P</i><i style="transform:scaleX(0.90)">P</i><i style="transform:scaleX(0.56)">M</i></div>
<div class="c le m" style="width:130px"><i>2</i><i>0</i><i>1</i><i>7</i><i>-</i><i>0</i><i>7</i><i>-</i><i>1</i><i>0</i><i>&nbsp;</i><i>0</i><i>1</i><i>:</i><i>3</i><i>7</i><i>:</i><i>0</i><i>1</i></div>
</div>
<div class="row alt hov" style="top:442px">
<div class="c rn m" style="width:31px"><i>1</i><i>6</i></div>
<div class="c ce m" style="width:90px"><i>2</i><i>6</i><i>1</i><i>7</i><i>0</i><i>5</i><i>0</i><i>0</i><i>1</i></div>
<div class="c ce m" style="width:80px"><i style="transform:scaleX(0.75)">C</i><i style="transform:scaleX(0.69)">O</i><i>2</i></div>
<div class="c ri m" style="width:70px"><i>0</i></div>
<div class="c le m" style="width:80px"><i style="transform:scaleX(0.60)">%</i><i style="transform:scaleX(0.69)">V</i><i style="transform:scaleX(0.69)">O</i><i style="transform:scaleX(0.82)">L</i></div>
<div class="c le m" style="width:130px"><i>2</i><i>0</i><i>1</i><i>7</i><i>-</i><i>0</i><i>7</i><i>-</i><i>1</i><i>0</i><i>&nbsp;</i><i>0</i><i>1</i><i>:</i><i>5</i><i>3</i><i>:</i><i>2</i><i>2</i></div>
</div>
<div class="row" style="top:467px">
<div class="c rn m" style="width:31px"><i>1</i><i>7</i></div>
<div class="c ce m" style="width:90px"><i>2</i><i>7</i><i>1</i><i>7</i><i>0</i><i>5</i><i>0</i><i>0</i><i>1</i></div>
<div class="c ce m" style="width:80px"><i style="transform:scaleX(0.75)">C</i><i style="transform:scaleX(0.69)">H</i><i>4</i></div>
<div class="c ri m" style="width:70px"><i>0</i><i>.</i><i>0</i></div>
<div class="c le m" style="width:80px"><i style="transform:scaleX(0.60)">%</i><i style="transform:scaleX(0.69)">V</i><i style="transform:scaleX(0.69)">O</i><i style="transform:scaleX(0.82)">L</i></div>
<div class="c le m" style="width:130px"><i>2</i><i>0</i><i>1</i><i>7</i><i>-</i><i>0</i><i>7</i><i>-</i><i>1</i><i>0</i><i>&nbsp;</i><i>0</i><i>1</i><i>:</i><i>5</i><i>3</i><i>:</i><i>2</i><i>1</i></div>
</div>
<div class="a" style="left:0;top:597px;width:666px;height:31px;background:#f4f4f4;border-top:1px solid #e3e3e3;border-radius:3px 3px 0 0"></div>
<div class="a m" style="left:6px;top:603px;width:43px;height:20px;border:1px solid #d4d4d4;background:#fff;font-family:'Liberation Sans',sans-serif;letter-spacing:0;font-size:11px;color:#777;line-height:19px;padding-left:5px">20</div>
<svg style="left:36px;top:610px" width="7" height="6" viewBox="0 0 7 6"><path d="M0 0 L7 0 L3.5 6 Z" fill="#000"/></svg>
<div class="a" style="left:56px;top:601px;width:1px;height:24px;background:#d4d4d4"></div>
<div class="a" style="left:112px;top:601px;width:1px;height:24px;background:#d4d4d4"></div>
<div class="a" style="left:202px;top:601px;width:1px;height:24px;background:#d4d4d4"></div>
<div class="a" style="left:258px;top:601px;width:1px;height:24px;background:#d4d4d4"></div>
<svg style="left:68px;top:608px" width="9" height="10" viewBox="0 0 9 10"><rect x="0" y="0" width="2.2" height="10" fill="#74c0ea"/><path d="M8.5 0 L2.8 5 L8.5 10 Z" fill="#74c0ea"/></svg>
<svg style="left:94px;top:608px" width="7" height="10" viewBox="0 0 7 10"><path d="M6.5 0 L0.5 5 L6.5 10 Z" fill="#74c0ea"/></svg>
<div class="a t" style="left:121px;top:606px;color:#333">第</div>
<div class="a" style="left:135px;top:602px;width:28px;height:22px;border:1px solid #d4d4d4;background:#fff;color:#888;font-size:12px;line-height:20px;padding-left:4px">1</div>
<div class="a t" style="left:165px;top:606px;color:#333">共<i class="s">1</i>页</div>
<svg style="left:215px;top:608px" width="7" height="11" viewBox="0 0 7 11"><path d="M0 0 L6.5 5.5 L0 11 Z" fill="#74c0ea"/></svg>
<svg style="left:240px;top:608px" width="9" height="11" viewBox="0 0 9 11"><path d="M0 0 L6.2 5.5 L0 11 Z" fill="#74c0ea"/><rect x="6.8" y="0" width="2.2" height="11" fill="#74c0ea"/></svg>
<svg style="left:269px;top:606px" width="12" height="12" viewBox="0 0 12 12"><path d="M8.0 3.4 A4.2 4.2 0 1 1 4.6 2.5" fill="none" stroke="#1f8dd6" stroke-width="1.7"/><path d="M3.6 0.4 L4.6 4.8 L8.2 1.8 Z" fill="#1f8dd6"/></svg>
<div class="a t" style="right:6px;top:606px;color:#333">显示<i class="s">1</i>到<i class="s">1</i><i class="s">7</i><i class="s">,</i>共<i class="s">1</i><i class="s">7</i>记录</div>
</div>
<svg style="left:1419px;top:278px" width="48" height="50" viewBox="0 0 48 50">
<defs><filter id="bl" x="-50%" y="-50%" width="200%" height="200%"><feGaussianBlur stdDeviation="2.5"/></filter></defs>
<circle cx="22" cy="28" r="21" fill="#000" opacity="0.22" filter="url(#bl)"/>
<circle cx="24" cy="24" r="22.5" fill="#f4f4f6" stroke="#c4c6d0" stroke-width="1.2"/>
<circle cx="24" cy="24" r="19.6" fill="#4ecb64" stroke="#2a3a2a" stroke-width="1"/>
<path d="M11.5 8.5 A19 19 0 0 1 36.5 8.5 L39.5 13.5 L8.5 13.5 Z" fill="#8ee09b" opacity="0.75"/>
<text x="8" y="27" font-family="Liberation Sans" font-weight="bold" font-size="11.5" fill="#fff" stroke="#333" stroke-width="1.2" paint-order="stroke">56</text>
</svg>
</body></html>
